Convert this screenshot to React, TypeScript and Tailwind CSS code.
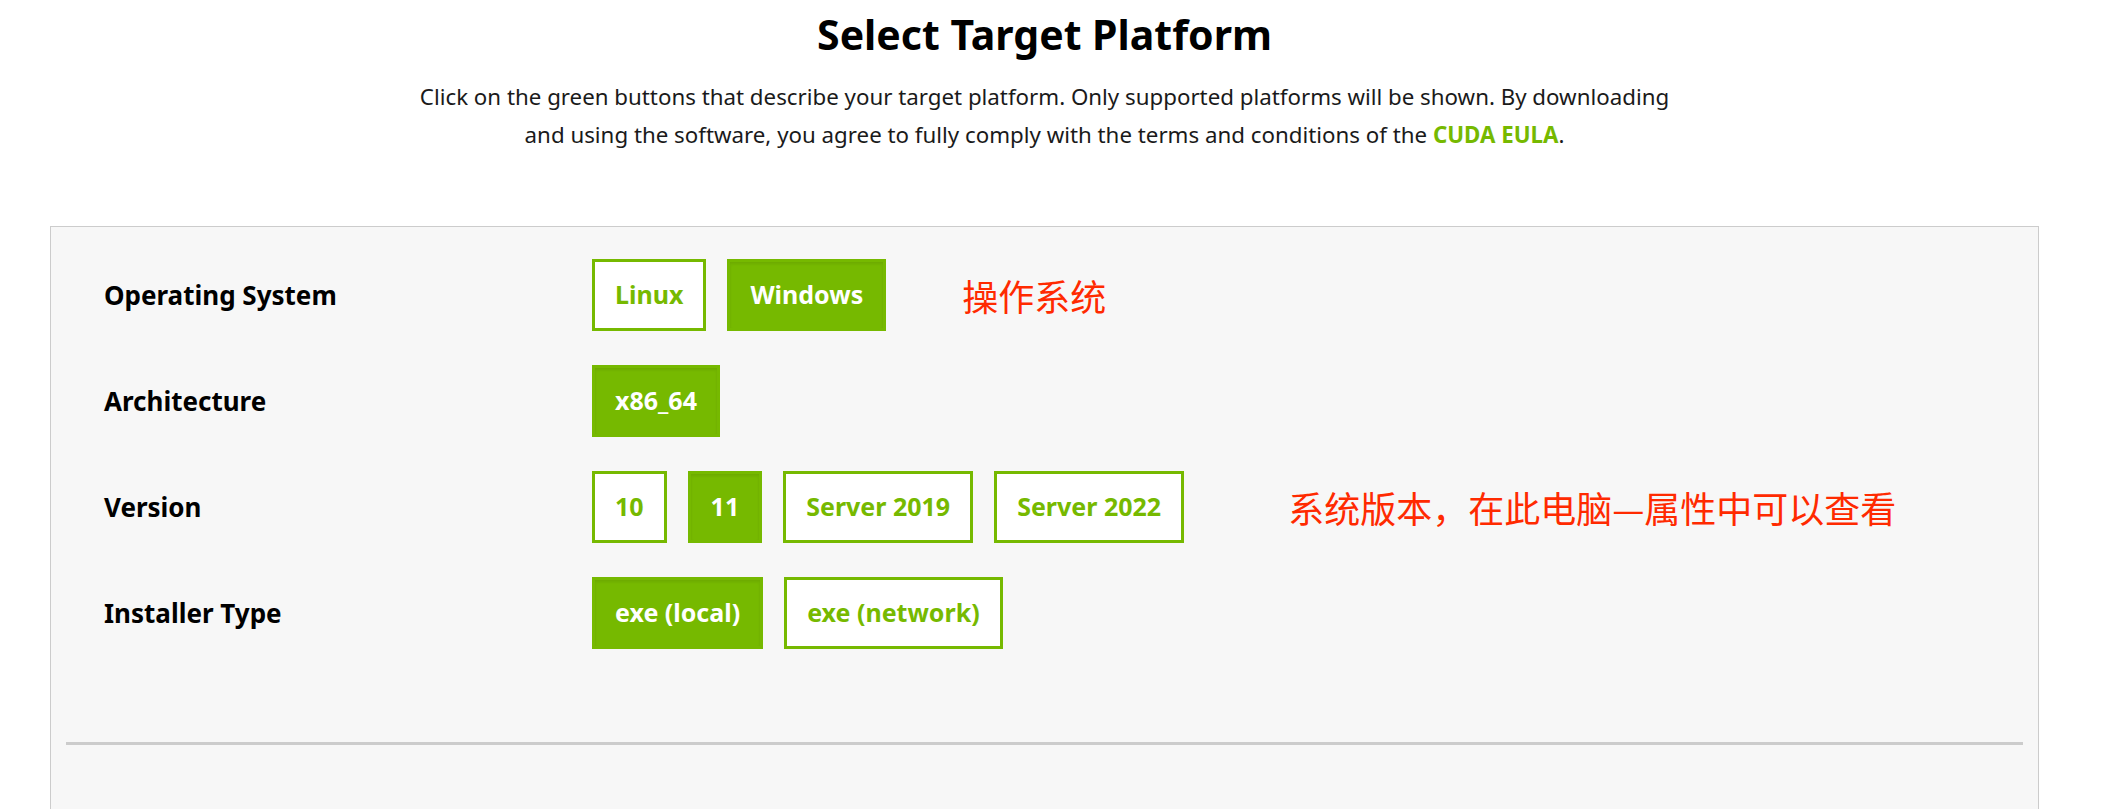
import React from 'react';

type Option = { label: string; active?: boolean };

const rows: { title: string; options: Option[]; note?: string }[] = [
  {
    title: 'Operating System',
    options: [{ label: 'Linux' }, { label: 'Windows', active: true }],
    note: '操作系统',
  },
  { title: 'Architecture', options: [{ label: 'x86_64', active: true }] },
  {
    title: 'Version',
    options: [
      { label: '10' },
      { label: '11', active: true },
      { label: 'Server 2019' },
      { label: 'Server 2022' },
    ],
    note: '系统版本，在此电脑—属性中可以查看',
  },
  {
    title: 'Installer Type',
    options: [{ label: 'exe (local)', active: true }, { label: 'exe (network)' }],
  },
];

function OptionButton({ label, active }: Option) {
  return (
    <button
      className={
        active
          ? 'h-[72px] px-[20px] border-[3px] border-[#76b900] bg-[#76b900] text-white text-[25px] font-bold shadow-[inset_0_2px_3px_rgba(0,0,0,0.08)]'
          : 'h-[72px] px-[20px] border-[3px] border-[#76b900] bg-white text-[#76b900] text-[25px] font-bold'
      }
    >
      {label}
    </button>
  );
}

export default function App() {
  return (
    <div className="min-h-screen bg-white text-[#1a1a1a]" style={{ fontFamily: '"Noto Sans", "Noto Sans CJK SC", sans-serif' }}>
      <div className="ml-[50px] mr-[75px] pt-[10px] text-center">
        <h1 className="text-[41px] leading-[48px] font-bold text-black">Select Target Platform</h1>
        <p className="mt-[20px] text-[22.3px] leading-[38px]">
          Click on the green buttons that describe your target platform. Only supported platforms will be shown. By downloading
          <br />
          and using the software, you agree to fully comply with the terms and conditions of the{' '}
          <span className="font-bold text-[#76b900]">CUDA EULA</span>.
        </p>
      </div>

      <div className="ml-[50px] mr-[75px] mt-[72px] border border-[#cccccc] bg-[#f7f7f7] px-[15px] pb-[120px]">
        <div className="flex flex-col gap-[34px] px-[38px] pt-[32px]">
          {rows.map((row) => (
            <div key={row.title} className="flex items-center">
              <div className="w-[488px] text-[26px] font-bold text-black">{row.title}</div>
              <div className="flex gap-[21px]">
                {row.options.map((o) => (
                  <OptionButton key={o.label} {...o} />
                ))}
              </div>
              {row.note && (
                <div
                  className={
                    row.title === 'Version'
                      ? 'ml-[104px] text-[36px] text-[#ff2a00]'
                      : 'ml-[76px] text-[36px] text-[#ff2a00]'
                  }
                  style={{ fontFamily: '"Noto Sans CJK SC", sans-serif' }}
                >
                  {row.note}
                </div>
              )}
            </div>
          ))}
        </div>
        <div className="mt-[93px] h-[3px] bg-[#cccccc]" />
      </div>
    </div>
  );
}
